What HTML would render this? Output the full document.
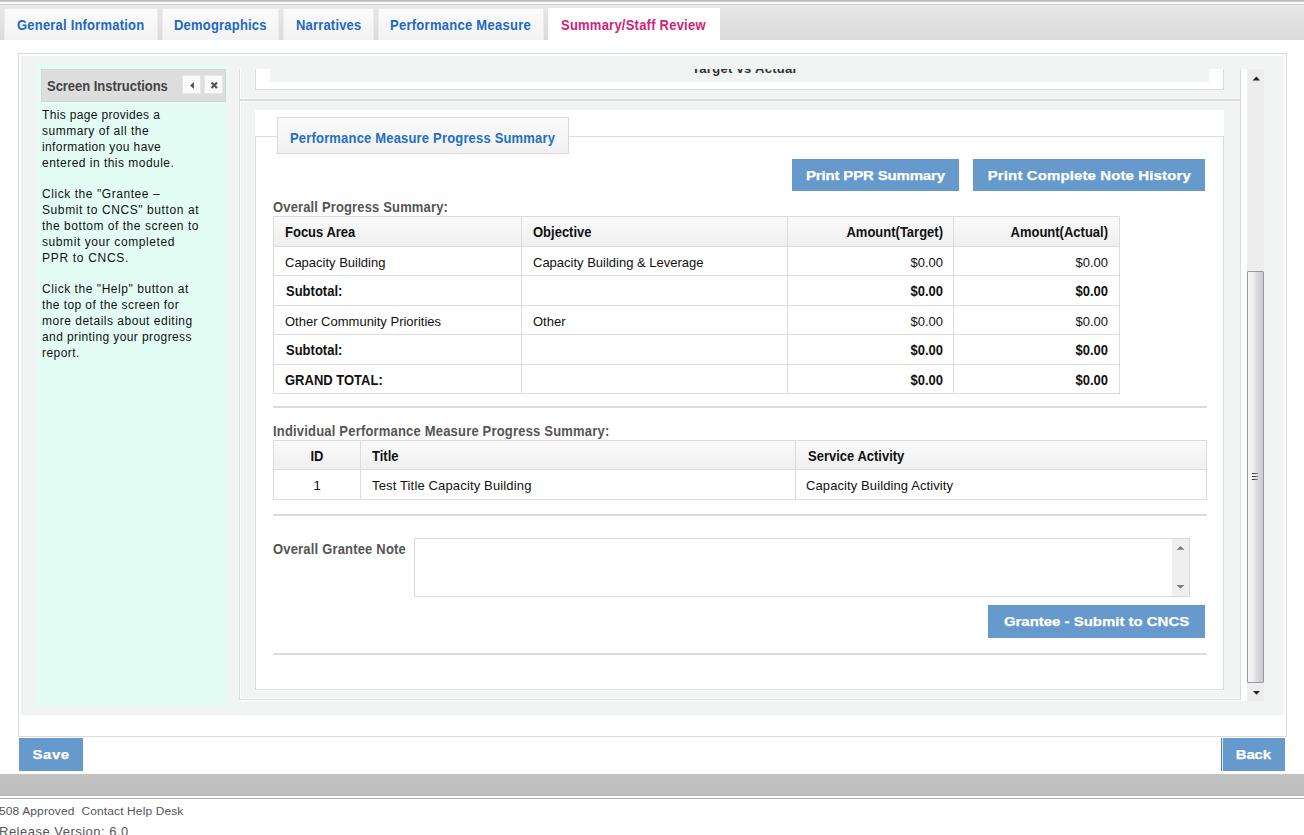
<!DOCTYPE html>
<html><head><meta charset="utf-8">
<style>
*{box-sizing:border-box;margin:0;padding:0}
html,body{width:1304px;height:835px;overflow:hidden;background:#fff}
body{position:relative;font-family:"Liberation Sans",sans-serif;color:#111}
.a{position:absolute}
.tx{position:absolute;white-space:pre;line-height:16px}
.topband{left:0;top:0;width:1304px;height:2px;background:linear-gradient(#b4b4b4,#cfcfcf)}
.tabbar{left:0;top:4px;width:1304px;height:36px;background:linear-gradient(#e8e8e8,#dbdbdb);border-top:1px solid #d2d2d2}
.tab{position:absolute;top:8px;height:32px;background:linear-gradient(#fbfbfb,#f3f3f3);border:1px solid #ececec;border-bottom:none;font-size:13px;font-weight:bold;color:#2169c2;line-height:16px;padding-top:9px;white-space:pre}
.tab span{display:inline-block;transform:scaleY(1.1);transform-origin:0 70%}
.tab.act{background:#fff;border-color:#fff;color:#cf2278}
.btn{position:absolute;background:#6699cc;color:#fff;font-weight:bold;font-size:13px;line-height:16px;white-space:pre;text-align:center}
.btn span{display:inline-block;transform:scaleX(1.15);-webkit-text-stroke:0.25px #fff}
.hl{position:absolute;background:#dcdcdc}
.vl{position:absolute;background:#dcdcdc}
.th{position:absolute;font-size:13px;font-weight:bold;white-space:pre;line-height:16px;color:#111;transform:scaleY(1.1);transform-origin:0 3px}
.sy{transform:scaleY(1.1);transform-origin:0 3px}
.td{position:absolute;font-size:13px;white-space:pre;line-height:16px;color:#111}
.r{text-align:right}
</style></head><body>

<div class="a topband"></div>
<div class="a tabbar"></div>
<div class="tab" style="left:4px;width:154px;padding-left:12px;letter-spacing:0.2px"><span>General Information</span></div>
<div class="tab" style="left:162px;width:117px;padding-left:11px;letter-spacing:0.2px"><span>Demographics</span></div>
<div class="tab" style="left:283px;width:91px;padding-left:12px;letter-spacing:0.18px"><span>Narratives</span></div>
<div class="tab" style="left:378px;width:166px;padding-left:11px;letter-spacing:0.27px"><span>Performance Measure</span></div>
<div class="tab act" style="left:548px;width:172px;padding-left:12px;letter-spacing:0.23px"><span>Summary/Staff Review</span></div>

<!-- outer container -->
<div class="a" style="left:18px;top:53px;width:1269px;height:684px;border:1px solid #dcdcdc;background:#fff"></div>
<div class="a" style="left:21px;top:56px;width:1263px;height:659px;background:#f2f3f3"></div>

<!-- instructions panel -->
<div class="a" style="left:37px;top:64px;width:192px;height:642px;background:linear-gradient(90deg,#e3fdf5 186px,#f0f4f3)"></div>
<div class="a" style="left:41px;top:69px;width:185px;height:33px;background:#dddddd;border:1px solid #d6d6d6"></div>
<div class="tx sy" style="left:47px;top:78px;font-size:13px;font-weight:bold;color:#444;letter-spacing:-0.03px">Screen Instructions</div>
<div class="a" style="left:182px;top:75px;width:19px;height:19px;background:#fafafa;border:1px solid #e6e6e6"></div>
<div class="a" style="left:204px;top:75px;width:19px;height:19px;background:#fafafa;border:1px solid #e6e6e6"></div>
<svg class="a" style="left:183px;top:76px" width="18" height="18"><path d="M11 6 L7 9.5 L11 13 Z" fill="#555"/></svg>
<svg class="a" style="left:205px;top:76px" width="18" height="18"><path d="M6.5 6.5 L12 12 M12 6.5 L6.5 12" stroke="#555" stroke-width="2.2"/></svg>

<div class="tx" style="left:42px;top:107px;font-size:12px;color:#111;letter-spacing:0.337px">This page provides a</div>
<div class="tx" style="left:42px;top:123px;font-size:12px;color:#111;letter-spacing:0.506px">summary of all the</div>
<div class="tx" style="left:42px;top:139px;font-size:12px;color:#111;letter-spacing:0.389px">information you have</div>
<div class="tx" style="left:42px;top:155px;font-size:12px;color:#111;letter-spacing:0.473px">entered in this module.</div>
<div class="tx" style="left:42px;top:186px;font-size:12px;color:#111;letter-spacing:0.558px">Click the "Grantee –</div>
<div class="tx" style="left:42px;top:202px;font-size:12px;color:#111;letter-spacing:0.592px">Submit to CNCS" button at</div>
<div class="tx" style="left:42px;top:218px;font-size:12px;color:#111;letter-spacing:0.527px">the bottom of the screen to</div>
<div class="tx" style="left:42px;top:234px;font-size:12px;color:#111;letter-spacing:0.58px">submit your completed</div>
<div class="tx" style="left:42px;top:250px;font-size:12px;color:#111;letter-spacing:0.7px">PPR to CNCS.</div>
<div class="tx" style="left:42px;top:281px;font-size:12px;color:#111;letter-spacing:0.548px">Click the "Help" button at</div>
<div class="tx" style="left:42px;top:297px;font-size:12px;color:#111;letter-spacing:0.413px">the top of the screen for</div>
<div class="tx" style="left:42px;top:313px;font-size:12px;color:#111;letter-spacing:0.512px">more details about editing</div>
<div class="tx" style="left:42px;top:329px;font-size:12px;color:#111;letter-spacing:0.404px">and printing your progress</div>
<div class="tx" style="left:42px;top:345px;font-size:12px;color:#111;letter-spacing:0.433px">report.</div>

<!-- scroll container -->
<div class="a" style="left:239px;top:69px;width:1002px;height:631px;border:1px solid #dcdcdc;border-top:none;background:#f2f3f3"></div>
<div class="hl" style="left:240px;top:99px;width:1000px;height:2px"></div>
<div class="a" style="left:240px;top:69px;width:1px;height:629px;background:#fff"></div>
<div class="a" style="left:240px;top:698px;width:1000px;height:1px;background:#fff"></div>
<div class="a" style="left:239px;top:700px;width:1002px;height:1px;background:#fff"></div>
<div class="a" style="left:240px;top:98px;width:1000px;height:1px;background:#fafafa"></div>
<div class="a" style="left:240px;top:101px;width:1000px;height:1px;background:#fafafa"></div>
<div class="a" style="left:255px;top:690px;width:969px;height:1px;background:#fff"></div>
<div class="hl" style="left:240px;top:99px;width:1000px;height:2px"></div>
<!-- upper box -->
<div class="a" style="left:255px;top:69px;width:969px;height:21px;background:#fff;border:1px solid #dcdcdc;border-top:none"></div>
<div class="a" style="left:270px;top:69px;width:939px;height:13px;background:#f2f3f3"></div>
<div class="tx" style="left:692px;top:61px;font-size:13px;font-weight:bold;color:#333;letter-spacing:0.3px;clip-path:inset(8px 0 0 0)">Target vs Actual</div>

<!-- white panel -->
<div class="a" style="left:255px;top:110px;width:969px;height:580px;background:#fff"></div>
<div class="a" style="left:255px;top:136px;width:969px;height:554px;border:1px solid #dcdcdc"></div>
<div class="a" style="left:277px;top:117px;width:292px;height:37px;background:linear-gradient(#fbfbfb,#f1f1f1);border:1px solid #dadada"></div>
<div class="tx sy" style="left:290px;top:130px;font-size:13px;font-weight:bold;color:#236fc8;letter-spacing:0.18px">Performance Measure Progress Summary</div>

<div class="btn" style="left:792px;top:159px;width:167px;height:32px;padding-top:9px"><span style="letter-spacing:-0.12px">Print PPR Summary</span></div>
<div class="btn" style="left:973px;top:159px;width:232px;height:32px;padding-top:9px"><span style="letter-spacing:0.12px">Print Complete Note History</span></div>

<div class="tx sy" style="left:273px;top:199px;font-size:13px;font-weight:bold;color:#555;letter-spacing:0.15px">Overall Progress Summary:</div>


<!-- table 1 -->
<div class="a" style="left:273px;top:216px;width:847px;height:178px;border:1px solid #dcdcdc;background:#fff"></div>
<div class="a" style="left:274px;top:217px;width:845px;height:29px;background:linear-gradient(#fafafa,#efefef)"></div>
<div class="hl" style="left:273px;top:246px;width:847px;height:1px"></div>
<div class="hl" style="left:273px;top:275px;width:847px;height:1px"></div>
<div class="hl" style="left:273px;top:305px;width:847px;height:1px"></div>
<div class="hl" style="left:273px;top:334px;width:847px;height:1px"></div>
<div class="hl" style="left:273px;top:364px;width:847px;height:1px"></div>
<div class="vl" style="left:521px;top:216px;width:1px;height:178px"></div>
<div class="vl" style="left:787px;top:216px;width:1px;height:178px"></div>
<div class="vl" style="left:953px;top:216px;width:1px;height:178px"></div>

<div class="th" style="left:285px;top:224px">Focus Area</div>
<div class="th" style="left:533px;top:224px">Objective</div>
<div class="th r" style="left:787px;width:156px;top:224px">Amount(Target)</div>
<div class="th r" style="left:953px;width:155px;top:224px">Amount(Actual)</div>

<div class="td" style="left:285px;top:255px">Capacity Building</div>
<div class="td" style="left:533px;top:255px">Capacity Building &amp; Leverage</div>
<div class="td r" style="left:787px;width:156px;top:255px">$0.00</div>
<div class="td r" style="left:953px;width:155px;top:255px">$0.00</div>

<div class="th" style="left:286px;top:283px">Subtotal:</div>
<div class="th r" style="left:787px;width:156px;top:283px">$0.00</div>
<div class="th r" style="left:953px;width:155px;top:283px">$0.00</div>

<div class="td" style="left:285px;top:314px">Other Community Priorities</div>
<div class="td" style="left:533px;top:314px">Other</div>
<div class="td r" style="left:787px;width:156px;top:314px">$0.00</div>
<div class="td r" style="left:953px;width:155px;top:314px">$0.00</div>

<div class="th" style="left:286px;top:342px">Subtotal:</div>
<div class="th r" style="left:787px;width:156px;top:342px">$0.00</div>
<div class="th r" style="left:953px;width:155px;top:342px">$0.00</div>

<div class="th" style="left:285px;top:372px">GRAND TOTAL:</div>
<div class="th r" style="left:787px;width:156px;top:372px">$0.00</div>
<div class="th r" style="left:953px;width:155px;top:372px">$0.00</div>

<div class="hl" style="left:273px;top:406px;width:934px;height:2px"></div>

<div class="tx sy" style="left:273px;top:423px;font-size:13px;font-weight:bold;color:#555;letter-spacing:0.19px">Individual Performance Measure Progress Summary:</div>

<!-- table 2 -->
<div class="a" style="left:273px;top:440px;width:934px;height:60px;border:1px solid #dcdcdc;background:#fff"></div>
<div class="a" style="left:274px;top:441px;width:932px;height:28px;background:linear-gradient(#fafafa,#efefef)"></div>
<div class="hl" style="left:273px;top:469px;width:934px;height:1px"></div>
<div class="vl" style="left:360px;top:440px;width:1px;height:60px"></div>
<div class="vl" style="left:795px;top:440px;width:1px;height:60px"></div>
<div class="th" style="left:274px;width:86px;top:448px;text-align:center">ID</div>
<div class="th" style="left:372px;top:448px">Title</div>
<div class="th" style="left:808px;top:448px">Service Activity</div>
<div class="td" style="left:274px;width:86px;top:478px;text-align:center">1</div>
<div class="td" style="left:372px;top:478px;letter-spacing:0.15px">Test Title Capacity Building</div>
<div class="td" style="left:806px;top:478px;letter-spacing:0.1px">Capacity Building Activity</div>

<div class="hl" style="left:273px;top:514px;width:934px;height:2px"></div>

<div class="tx sy" style="left:273px;top:541px;font-size:13px;font-weight:bold;color:#555;letter-spacing:0.18px">Overall Grantee Note</div>
<div class="a" style="left:414px;top:538px;width:776px;height:59px;border:1px solid #dadada;background:#fff"></div>
<div class="a" style="left:1172px;top:539px;width:17px;height:57px;background:#efefef"></div>
<svg class="a" style="left:1172px;top:539px" width="17" height="57"><path d="M4.5 10.8 L8.5 7 L12.5 10.8 Z" fill="#7a7a7a"/><path d="M4.5 46 L8.5 49.8 L12.5 46 Z" fill="#7a7a7a"/></svg>

<div class="btn" style="left:988px;top:605px;width:217px;height:33px;padding-top:9px"><span style="letter-spacing:0px">Grantee - Submit to CNCS</span></div>

<div class="hl" style="left:273px;top:653px;width:934px;height:2px"></div>

<!-- scrollbar -->
<div class="a" style="left:1241px;top:69px;width:6px;height:632px;background:#fff"></div>
<div class="a" style="left:1247px;top:69px;width:17px;height:632px;background:#ededed"></div>
<svg class="a" style="left:1247px;top:69px" width="17" height="20"><path d="M5.5 11.5 L9.5 7.5 L13 11.5 Z" fill="#222"/></svg>
<div class="a" style="left:1247px;top:271px;width:17px;height:412px;border:1px solid #999;border-radius:1px;background:linear-gradient(90deg,#f5f5f5,#eeeeee 35%,#dadade 60%,#c9c9cf)"></div>
<div class="a" style="left:1252px;top:473px;width:6px;height:1px;background:linear-gradient(90deg,#222,#555 50%,#999)"></div>
<div class="a" style="left:1252px;top:476px;width:6px;height:1px;background:linear-gradient(90deg,#222,#555 50%,#999)"></div>
<div class="a" style="left:1252px;top:479px;width:6px;height:1px;background:linear-gradient(90deg,#222,#555 50%,#999)"></div>
<svg class="a" style="left:1247px;top:683px" width="17" height="18"><path d="M6 8 L9.5 11.8 L13 8 Z" fill="#222"/></svg>

<!-- bottom -->
<div class="btn" style="left:19px;top:738px;width:64px;height:33px;padding-top:9px"><span style="letter-spacing:0.45px">Save</span></div>
<div class="btn" style="left:1221px;top:738px;width:64px;height:33px;padding-top:9px;border-left:1px solid #617d9a;box-shadow:inset 1px 0 #cfeefc"><span style="letter-spacing:-0.1px">Back</span></div>
<div class="a" style="left:0;top:774px;width:1304px;height:22px;background:linear-gradient(#c2c2c2,#c0c0c0 80%,#b9b9b9)"></div>
<div class="a" style="left:0;top:798px;width:1304px;height:1px;background:#adadad"></div>
<div class="tx" style="left:-1px;top:804px;font-size:10px;color:#555;transform:scaleX(1.2);transform-origin:0 0;letter-spacing:0.1px">508 Approved  Contact Help Desk</div>
<div class="tx" style="left:-1px;top:824px;font-size:13px;color:#555;letter-spacing:0.49px">Release Version: 6.0</div>

</body></html>
